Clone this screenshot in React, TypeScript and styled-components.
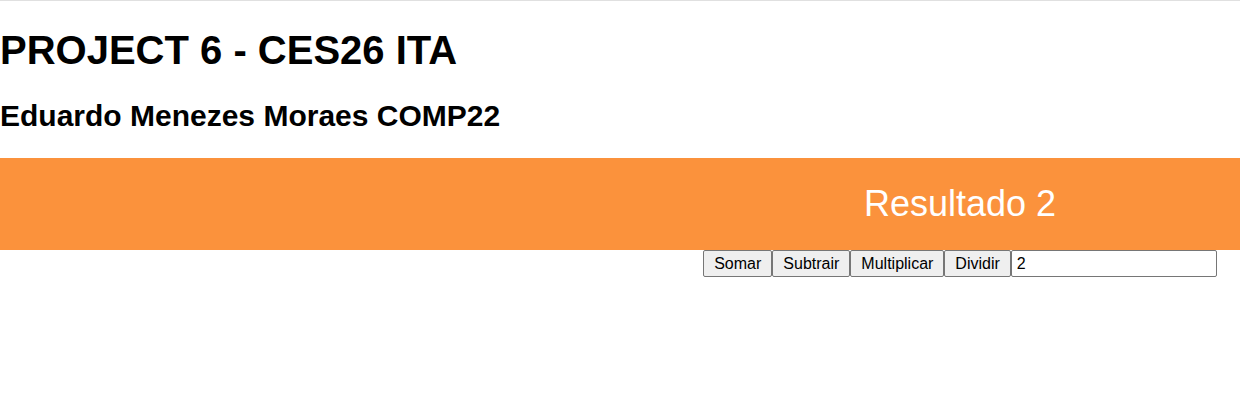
import { useState } from "react";
import styled, { createGlobalStyle } from "styled-components";

const GlobalStyle = createGlobalStyle`
  html, body {
    margin: 0;
    padding: 0;
    background: #ffffff;
  }
  body {
    font-family: "Liberation Sans", Arial, sans-serif;
    color: #000000;
  }
`;

const Page = styled.div`
  border-top: 1px solid #e0e0e0;
`;

const Title = styled.h1`
  margin: 27px 0 26px;
  font-size: 40px;
  font-weight: 700;
`;

const Subtitle = styled.h2`
  margin: 0 0 25px;
  font-size: 30px;
  font-weight: 700;
`;

const Column = styled.div`
  width: 560px;
  margin-left: auto;
  display: flex;
  justify-content: center;
  align-items: center;
`;

const ResultBand = styled.div`
  height: 92px;
  background: #fb923c;
  display: flex;
`;

const ResultText = styled.span`
  font-size: 36px;
  color: #ffffff;
`;

const Toolbar = styled.div`
  display: flex;
`;

const OpButton = styled.button`
  box-sizing: border-box;
  height: 27px;
  padding: 0 10px;
  margin: 0;
  border: 1px solid #767676;
  border-radius: 2px;
  background: #efefef;
  font-family: "Liberation Sans", Arial, sans-serif;
  font-size: 16px;
  color: #000000;
`;

const ValueInput = styled.input`
  box-sizing: border-box;
  width: 206px;
  height: 27px;
  margin: 0;
  padding: 0 5px;
  border: 1px solid #767676;
  border-radius: 2px;
  font-family: "Liberation Sans", Arial, sans-serif;
  font-size: 16px;
  color: #000000;
`;

const ops: { label: string; fn: (a: number, b: number) => number }[] = [
  { label: "Somar", fn: (a, b) => a + b },
  { label: "Subtrair", fn: (a, b) => a - b },
  { label: "Multiplicar", fn: (a, b) => a * b },
  { label: "Dividir", fn: (a, b) => a / b },
];

export default function App() {
  const [result, setResult] = useState(2);
  const [value, setValue] = useState("2");

  return (
    <Page>
      <GlobalStyle />
      <Title>PROJECT 6 - CES26 ITA</Title>
      <Subtitle>Eduardo Menezes Moraes COMP22</Subtitle>
      <ResultBand>
        <Column>
          <ResultText>Resultado {result}</ResultText>
        </Column>
      </ResultBand>
      <Column>
        <Toolbar>
          {ops.map((op) => (
            <OpButton
              key={op.label}
              onClick={() => setResult((r) => op.fn(r, Number(value) || 0))}
            >
              {op.label}
            </OpButton>
          ))}
          <ValueInput value={value} onChange={(e) => setValue(e.target.value)} />
        </Toolbar>
      </Column>
    </Page>
  );
}
